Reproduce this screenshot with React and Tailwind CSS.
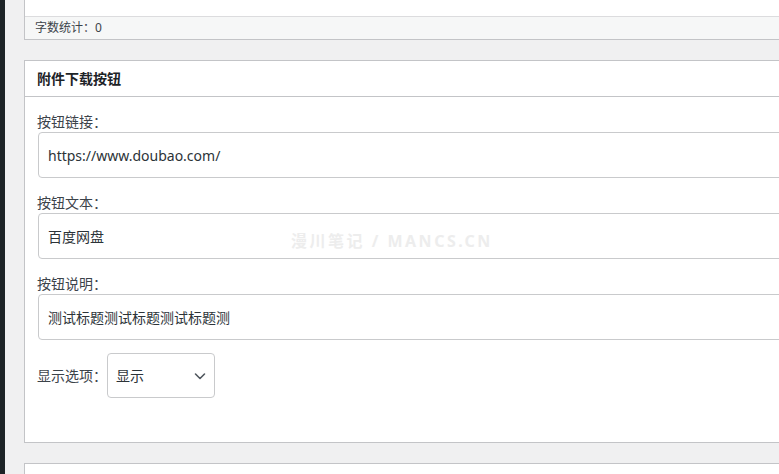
import React from 'react';

const Field = ({ label, value, first }) => (
    <div className={first ? '' : 'mt-[16px]'}>
        <div className="h-[18px] leading-[18px] text-[14px] text-[#3c434a]">{label}</div>
        <div className="mt-[1px] ml-[1px] w-[780px] h-[46px] border border-[#c9cacc] rounded-[4px] bg-white flex items-center pl-[9px] text-[14px] text-[#2c3338]">
            {value}
        </div>
    </div>
);

export default function App() {
    return (
        <div className="w-[779px] h-[474px] overflow-hidden bg-[#f0f0f1] flex font-['Noto_Sans','Noto_Sans_CJK_SC',sans-serif]">
            <div className="w-[5px] shrink-0 bg-[#1d2327]"></div>
            <div className="flex-1 min-w-0 pl-[19px] flex flex-col">
                {/* word count box */}
                <div className="border-l border-b border-[#c3c4c7] bg-white">
                    <div className="h-[17px] border-b border-[#dcdcde]"></div>
                    <div className="h-[22px] bg-[#f6f7f7] pl-[10px] flex items-center text-[12px] text-[#3c434a]">字数统计：0</div>
                </div>

                {/* attachment button panel */}
                <div className="relative mt-[20px] border-l border-t border-b border-[#c3c4c7] bg-white h-[383px] overflow-hidden">
                    <div className="h-[36px] border-b border-[#c3c4c7] pl-[12px] flex items-center text-[14px] font-bold text-[#1d2327]">
                        附件下载按钮
                    </div>
                    <div className="pl-[12px] pt-[16px]">
                        <Field first label="按钮链接：" value="https://www.doubao.com/" />
                        <Field label="按钮文本：" value="百度网盘" />
                        <Field label="按钮说明：" value="测试标题测试标题测试标题测" />
                        <div className="mt-[13px] flex items-center">
                            <span className="text-[14px] text-[#3c434a] w-[70px]">显示选项：</span>
                            <div className="w-[108px] h-[45px] border border-[#c9cacc] rounded-[4px] flex items-center justify-between pl-[8px] pr-[6px] text-[14px] text-[#2c3338]">
                                <span>显示</span>
                                <svg width="16" height="16" viewBox="0 0 16 16" fill="none">
                                    <path d="M3.5 6l4.5 4.5L12.5 6" stroke="#50575e" strokeWidth="1.6" strokeLinecap="round" strokeLinejoin="round" />
                                </svg>
                            </div>
                        </div>
                    </div>
                    <div className="absolute left-[266px] top-[168px] text-[16px] font-bold tracking-[2.5px] text-[#ededed] select-none">
                        漫川笔记 / MANCS.CN
                    </div>
                </div>

                <div className="mt-[20px] flex-1 border-l border-t border-[#c3c4c7] bg-white"></div>
            </div>
        </div>
    );
}
